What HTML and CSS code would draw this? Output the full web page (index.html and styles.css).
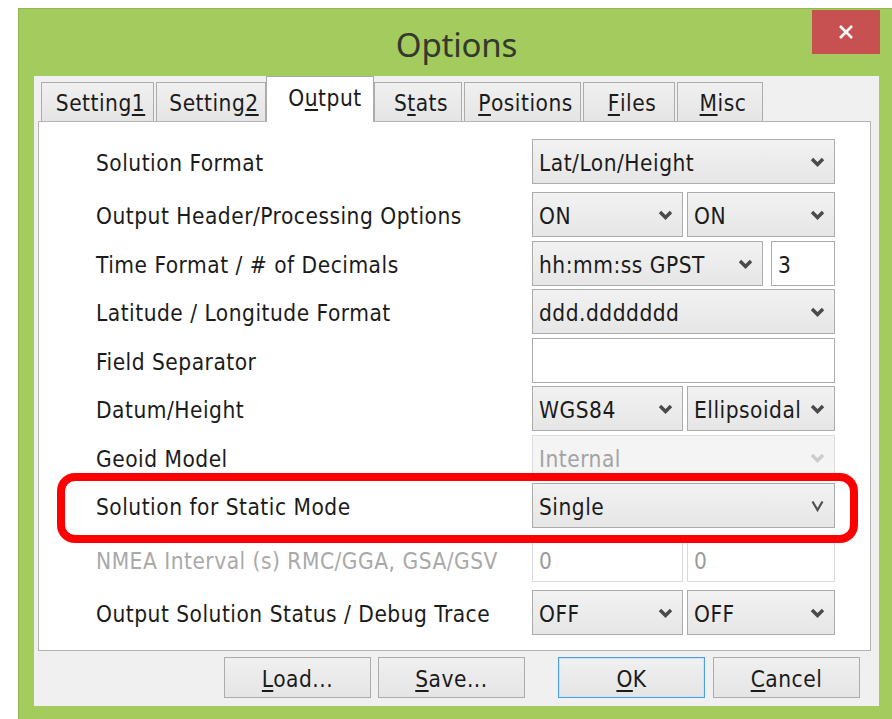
FILE: index.html
```html
<!DOCTYPE html>
<html lang="en">
<head>
<meta charset="utf-8">
<title>Options</title>
<link rel="stylesheet" href="styles.css">
</head>
<body>
<div class="window">
  <div class="titlebar">
    <span class="title">Options</span>
    <button class="close" type="button" aria-label="Close">
      <svg width="16" height="16" viewBox="0 0 16 16"><path d="M2 2 L14 14 M14 2 L2 14" stroke="#fff" stroke-width="2.6" fill="none"/></svg>
    </button>
  </div>
  <div class="client">
    <div class="tabs">
      <div class="tab tab-setting1">Setting<u>1</u></div>
      <div class="tab tab-setting2">Setting<u>2</u></div>
      <div class="tab tab-output active">O<u>u</u>tput</div>
      <div class="tab tab-stats">S<u>t</u>ats</div>
      <div class="tab tab-positions"><u>P</u>ositions</div>
      <div class="tab tab-files"><u>F</u>iles</div>
      <div class="tab tab-misc"><u>M</u>isc</div>
    </div>

    <div class="panel">
      <div class="row">
        <span class="label">Solution Format</span>
        <div class="controls">
          <div class="combo full"><span>Lat/Lon/Height</span><svg class="chev" viewBox="0 0 15 10"><path d="M2 2 L7.5 7.5 L13 2"/></svg></div>
        </div>
      </div>
      <div class="row gap-lg">
        <span class="label">Output Header/Processing Options</span>
        <div class="controls">
          <div class="combo half-a"><span>ON</span><svg class="chev" viewBox="0 0 15 10"><path d="M2 2 L7.5 7.5 L13 2"/></svg></div>
          <div class="combo half-b"><span>ON</span><svg class="chev" viewBox="0 0 15 10"><path d="M2 2 L7.5 7.5 L13 2"/></svg></div>
        </div>
      </div>
      <div class="row">
        <span class="label">Time Format / # of Decimals</span>
        <div class="controls wide-gap">
          <div class="combo time"><span>hh:mm:ss GPST</span><svg class="chev" viewBox="0 0 15 10"><path d="M2 2 L7.5 7.5 L13 2"/></svg></div>
          <div class="edit decimals">3</div>
        </div>
      </div>
      <div class="row">
        <span class="label">Latitude / Longitude Format</span>
        <div class="controls">
          <div class="combo full"><span>ddd.ddddddd</span><svg class="chev" viewBox="0 0 15 10"><path d="M2 2 L7.5 7.5 L13 2"/></svg></div>
        </div>
      </div>
      <div class="row">
        <span class="label">Field Separator</span>
        <div class="controls">
          <div class="edit full"></div>
        </div>
      </div>
      <div class="row">
        <span class="label">Datum/Height</span>
        <div class="controls">
          <div class="combo half-a"><span>WGS84</span><svg class="chev" viewBox="0 0 15 10"><path d="M2 2 L7.5 7.5 L13 2"/></svg></div>
          <div class="combo half-b"><span>Ellipsoidal</span><svg class="chev" viewBox="0 0 15 10"><path d="M2 2 L7.5 7.5 L13 2"/></svg></div>
        </div>
      </div>
      <div class="row">
        <span class="label">Geoid Model</span>
        <div class="controls">
          <div class="combo full disabled"><span>Internal</span><svg class="chev" viewBox="0 0 15 10"><path d="M2 2 L7.5 7.5 L13 2"/></svg></div>
        </div>
      </div>
      <div class="row">
        <span class="label">Solution for Static Mode</span>
        <div class="controls">
          <div class="combo full"><span>Single</span><svg class="chev thin" viewBox="0 0 15 12"><path d="M2.5 1.5 L7.5 10 L12.5 1.5"/></svg></div>
        </div>
      </div>
      <div class="row gap-xl">
        <span class="label disabled-text">NMEA Interval (s) RMC/GGA, GSA/GSV</span>
        <div class="controls">
          <div class="edit half-a disabled">0</div>
          <div class="edit half-b disabled">0</div>
        </div>
      </div>
      <div class="row gap-lg">
        <span class="label">Output Solution Status / Debug Trace</span>
        <div class="controls">
          <div class="combo half-a"><span>OFF</span><svg class="chev" viewBox="0 0 15 10"><path d="M2 2 L7.5 7.5 L13 2"/></svg></div>
          <div class="combo half-b"><span>OFF</span><svg class="chev" viewBox="0 0 15 10"><path d="M2 2 L7.5 7.5 L13 2"/></svg></div>
        </div>
      </div>

      <div class="highlight"></div>
    </div>

    <div class="buttons">
      <button class="btn" type="button"><u>L</u>oad...</button>
      <button class="btn" type="button"><u>S</u>ave...</button>
      <button class="btn default" type="button"><u>O</u>K</button>
      <button class="btn" type="button"><u>C</u>ancel</button>
    </div>
  </div>
</div>
</body>
</html>
```

FILE: styles.css
```css
* {
  box-sizing: border-box;
}

html,
body {
  margin: 0;
  background: #ffffff;
  overflow: hidden;
}

body {
  font-family: "DejaVu Sans Condensed", "DejaVu Sans", sans-serif;
  font-stretch: condensed;
  font-size: 22.5px;
  letter-spacing: 0.5px;
  color: #1b1b1b;
}

u {
  text-decoration-thickness: 2px;
  text-underline-offset: 3px;
}

/* window frame */
.window {
  margin: 8px 0 0 18px;
  width: 877px;
  height: 716px;
  background: #a3cb5d;
  border-top: 1px solid #8fb851;
  border-left: 1px solid #8fb851;
  padding: 0 16px 0 15px;
}

.titlebar {
  position: relative;
  height: 67px;
  display: flex;
  align-items: center;
  justify-content: center;
  padding-top: 4px;
}

.title {
  font-family: "Noto Sans", "Open Sans", sans-serif;
  font-stretch: normal;
  font-size: 33px;
  letter-spacing: -0.2px;
  color: #33392c;
}

.close {
  position: absolute;
  top: 1px;
  right: -1px;
  width: 68px;
  height: 44px;
  border: none;
  padding: 0;
  background: #c75050;
  display: flex;
  align-items: center;
  justify-content: center;
}

/* client area */
.client {
  width: 845px;
  height: 630px;
  background: #f0f0f0;
  padding-left: 4px;
}

.tabs {
  height: 45px;
  display: flex;
  align-items: flex-end;
  gap: 2px;
  padding-left: 3px;
}

.tab {
  height: 39px;
  display: flex;
  align-items: center;
  justify-content: center;
  padding: 2px 0 0 6px;
  border: 1px solid #acacac;
  border-bottom: none;
  background: linear-gradient(#f0f0f0, #e5e5e5);
  white-space: nowrap;
}

.tab-setting1 { width: 113px; }
.tab-setting2 { width: 110px; }
.tab-output { width: 108px; }
.tab-stats { width: 88px; }
.tab-positions { width: 117px; }
.tab-files { width: 92px; }
.tab-misc { width: 86px; }

.tab.active {
  position: relative;
  z-index: 1;
  height: 46px;
  margin: 0 -2px -1px;
  padding: 0 0 4px 10px;
  background: #ffffff;
}

.panel {
  position: relative;
  width: 833px;
  height: 530px;
  background: #ffffff;
  border: 1px solid #b4b4b4;
  padding: 17px 35px 0 57px;
}

.row {
  height: 45px;
  display: flex;
  align-items: center;
  margin-top: 3.5px;
}

.row:first-child {
  margin-top: 0;
}

.row.gap-lg {
  margin-top: 8px;
}

.row.gap-xl {
  margin-top: 8.5px;
}

.label {
  flex: 1;
  white-space: nowrap;
  padding-top: 3px;
}

.disabled-text {
  color: #a9a9a9;
}

.controls {
  width: 303px;
  height: 45px;
  display: flex;
  gap: 4px;
}

.controls.wide-gap {
  gap: 8px;
}

.combo,
.edit {
  height: 45px;
  border: 1px solid #acacac;
  display: flex;
  align-items: center;
  padding: 3px 0 0 6px;
  white-space: nowrap;
}

.combo {
  justify-content: space-between;
  background: linear-gradient(#f2f2f2, #e6e6e6);
  padding-right: 9px;
}

.edit {
  background: #ffffff;
}

.full { width: 303px; }
.half-a { width: 151px; }
.half-b { width: 148px; }
.time { width: 231px; }
.decimals { width: 64px; }

.chev {
  width: 15px;
  height: 10px;
  flex: none;
  margin-top: -2px;
}

.chev path {
  fill: none;
  stroke: #4a4a4a;
  stroke-width: 3.4;
}

.chev.thin {
  height: 12px;
}

.chev.thin path {
  stroke-width: 2.2;
  stroke: #4f4f4f;
}

.combo.disabled {
  background: #f4f4f4;
  border-color: #dddddd;
  color: #a3a3a3;
}

.combo.disabled .chev path {
  stroke: #cccccc;
}

.edit.disabled {
  border-color: #dadada;
  color: #9a9a9a;
}

/* red marker around the static mode row */
.highlight {
  position: absolute;
  left: 18px;
  top: 351px;
  width: 801px;
  height: 70px;
  border: 8px solid #ff0000;
  border-radius: 18px;
  pointer-events: none;
}

/* dialog buttons */
.buttons {
  display: flex;
  justify-content: flex-end;
  gap: 7px;
  margin-top: 6px;
  padding-right: 19px;
}

.btn {
  width: 147px;
  height: 41px;
  font: inherit;
  letter-spacing: inherit;
  color: #1b1b1b;
  border: 1px solid #acacac;
  background: linear-gradient(#f0f0f0, #e5e5e5);
  padding: 3px 0 0;
}

.btn.default {
  margin-left: 26px;
  margin-right: 1px;
  border-color: #4f9de6;
  box-shadow: inset 0 0 0 1px #cde3f8;
}
```
